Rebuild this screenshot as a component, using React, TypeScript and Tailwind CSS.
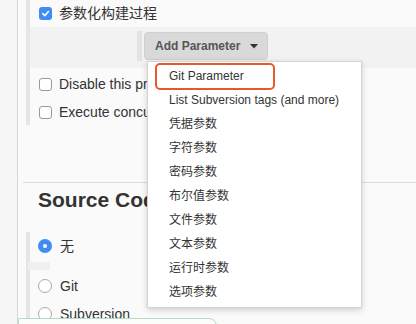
import React from "react";

const Check = ({ checked }: { checked?: boolean }) =>
  checked ? (
    <span className="flex h-[13px] w-[13px] shrink-0 items-center justify-center rounded-[3px] bg-[#3f8cf5]">
      <svg width="9" height="9" viewBox="0 0 10 10">
        <path d="M2 5.2 L4.2 7.4 L8.2 2.8" fill="none" stroke="#fff" strokeWidth="1.8" strokeLinecap="round" strokeLinejoin="round" />
      </svg>
    </span>
  ) : (
    <span className="h-[13px] w-[13px] shrink-0 rounded-[3px] border border-[#9a9a9a] bg-white" />
  );

const Radio = ({ checked }: { checked?: boolean }) =>
  checked ? (
    <span className="flex h-[14px] w-[14px] shrink-0 items-center justify-center rounded-full bg-[#3f8cf5]">
      <span className="h-[4px] w-[4px] rounded-full bg-white" />
    </span>
  ) : (
    <span className="h-[14px] w-[14px] shrink-0 rounded-full border border-[#a8a8a8] bg-white" />
  );

const items = [
  "Git Parameter",
  "List Subversion tags (and more)",
  "凭据参数",
  "字符参数",
  "密码参数",
  "布尔值参数",
  "文件参数",
  "文本参数",
  "运行时参数",
  "选项参数",
];

export default function App() {
  return (
    <div
      className="relative flex h-[324px] w-[416px] overflow-hidden bg-[#f6f6f6] text-[#333]"
      style={{ fontFamily: '"Liberation Sans", Arial, "Noto Sans CJK SC", sans-serif' }}
    >
      <div className="w-[17px] shrink-0" />
      <div className="flex flex-1 flex-col border-l border-[#d6d6d6] bg-[#fafafa] pl-[8px]">
        <div className="flex h-[125px] flex-col border-l-4 border-[#e6e6e6]">
          <div className="flex h-[27px] items-center gap-[7px] pl-[9px] text-[14px]">
            <Check checked />
            <span>参数化构建过程</span>
          </div>
          <div className="flex h-[41px] items-start bg-[#f2f2f2] pl-[107px] pt-[4px]">
            <div className="h-[30px] w-[5px] bg-[#e2e2e2]" />
            <button className="ml-[2px] mt-[1px] flex h-[28px] items-center gap-[10px] rounded-[4px] border border-[#cfcfcf] bg-[#d9d9d9] pl-[10px] pr-[9px] text-[12px] font-bold text-[#555]">
              <span>Add Parameter</span>
              <svg width="8" height="5" viewBox="0 0 8 5">
                <path d="M0 0 L8 0 L4 4.5 Z" fill="#333" />
              </svg>
            </button>
          </div>
          <div className="flex h-[32px] items-center gap-[7px] pl-[9px] text-[14px]">
            <Check />
            <span className="whitespace-nowrap">Disable this project</span>
          </div>
          <div className="flex h-[25px] items-center gap-[7px] pl-[9px] text-[14px]">
            <Check />
            <span className="whitespace-nowrap">Execute concurrent builds if necessary</span>
          </div>
        </div>
        <div className="ml-[-3px] mt-[57px] border-t border-[#dcdcdc]" />
        <div className="mt-[5px] h-[24px] whitespace-nowrap pl-[12px] text-[21px] font-bold leading-[24px] text-[#333]">
          Source Code Management
        </div>
        <div className="mt-[20px] flex flex-1 flex-col border-l-4 border-[#e6e6e6]">
          <div className="flex h-[28px] items-center gap-[8px] pl-[8px] text-[14px]">
            <Radio checked />
            <span>无</span>
          </div>
          <div className="ml-[-2px] mt-[2px] h-[8px] w-[22px] bg-[#f0f0f0]" />
          <div className="flex h-[32px] items-center gap-[8px] pl-[8px] text-[14px]">
            <Radio />
            <span>Git</span>
          </div>
          <div className="flex h-[24px] items-center gap-[8px] pl-[8px] text-[14px]">
            <Radio />
            <span>Subversion</span>
          </div>
        </div>
      </div>

      <div className="absolute left-[147px] top-[61px] h-[247px] w-[215px] border border-[#d4d4d4] bg-white pt-[2px] shadow-[0_2px_6px_rgba(0,0,0,0.18)]">
        {items.map((t) => (
          <div key={t} className="flex h-[24px] items-center whitespace-nowrap pl-[21px] text-[12px] text-[#333]">
            {t}
          </div>
        ))}
      </div>
      <div className="absolute left-[155px] top-[63px] h-[27px] w-[120px] rounded-[5px] border-2 border-[#e8582b]" />

      <div className="absolute left-[18px] top-[318px] h-[20px] w-[199px] rounded-tr-[8px] border border-[#b8dbc3] bg-[#fbfdfb]" />
    </div>
  );
}
